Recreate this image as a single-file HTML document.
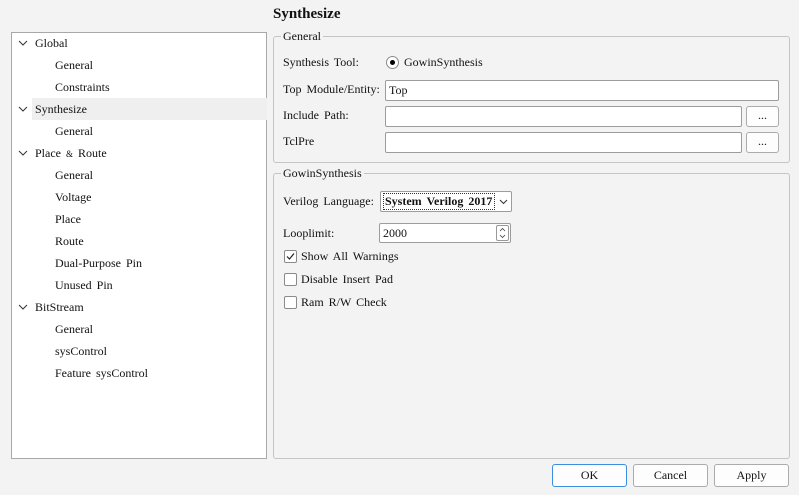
<!DOCTYPE html>
<html><head><meta charset="utf-8"><style>
*{box-sizing:border-box;margin:0;padding:0}
body{width:799px;height:495px;background:#f3f3f3;font-family:"Liberation Serif",serif;font-size:12px;color:#111;position:relative;overflow:hidden;word-spacing:2px}
.a{position:absolute;white-space:nowrap}
.tree{position:absolute;left:11px;top:32px;width:256px;height:427px;background:#fff;border:1px solid #a8a8a8}
.row{position:absolute;left:0;height:22px;line-height:22px}
.chev{position:absolute;left:6px;top:7px;width:10px;height:7px}
.grp{position:absolute;border:1px solid #c4c4c4;border-radius:3px}
.leg{position:absolute;background:#f3f3f3;padding:0 2px;line-height:12px}
.inp{position:absolute;background:#fff;border:1px solid #9c9c9c;border-radius:2px;padding-left:3px;line-height:18px}
.btn{position:absolute;background:#fdfdfd;border:1px solid #ababab;border-radius:3px;text-align:center}
.cb{position:absolute;width:13px;height:13px;border:1px solid #8a8a8a;border-radius:2px;background:#fff}
</style></head><body>
<div class="tree">
 <div class="row" style="top:65px;left:20px;width:235px;background:#efefef"></div>
 <svg class="chev" style="top:7px" viewBox="0 0 10 7"><path d="M1 1L5 5L9 1" fill="none" stroke="#333" stroke-width="1"/></svg>
 <div class="row" style="top:-1px;left:23px">Global</div>
 <div class="row" style="top:21px;left:43px">General</div>
 <div class="row" style="top:43px;left:43px">Constraints</div>
 <svg class="chev" style="top:73px" viewBox="0 0 10 7"><path d="M1 1L5 5L9 1" fill="none" stroke="#333" stroke-width="1"/></svg>
 <div class="row" style="top:65px;left:23px">Synthesize</div>
 <div class="row" style="top:87px;left:43px">General</div>
 <svg class="chev" style="top:117px" viewBox="0 0 10 7"><path d="M1 1L5 5L9 1" fill="none" stroke="#333" stroke-width="1"/></svg>
 <div class="row" style="top:109px;left:23px">Place <span style="font-size:9px">&amp;</span> Route</div>
 <div class="row" style="top:131px;left:43px">General</div>
 <div class="row" style="top:153px;left:43px">Voltage</div>
 <div class="row" style="top:175px;left:43px">Place</div>
 <div class="row" style="top:197px;left:43px">Route</div>
 <div class="row" style="top:219px;left:43px">Dual-Purpose Pin</div>
 <div class="row" style="top:241px;left:43px">Unused Pin</div>
 <svg class="chev" style="top:271px" viewBox="0 0 10 7"><path d="M1 1L5 5L9 1" fill="none" stroke="#333" stroke-width="1"/></svg>
 <div class="row" style="top:263px;left:23px">BitStream</div>
 <div class="row" style="top:285px;left:43px">General</div>
 <div class="row" style="top:307px;left:43px">sysControl</div>
 <div class="row" style="top:329px;left:43px">Feature sysControl</div>
</div>

<div class="a" style="left:273px;top:6px;font-size:15px;font-weight:bold;word-spacing:0">Synthesize</div>

<div class="grp" style="left:273px;top:36px;width:517px;height:127px"></div>
<div class="leg a" style="left:281px;top:30px">General</div>
<div class="a" style="left:283px;top:55px">Synthesis Tool:</div>
<div class="a" style="left:386px;top:56px;width:13px;height:13px;border:1px solid #8a8a8a;border-radius:50%;background:#fff"><div style="position:absolute;left:3px;top:3px;width:5px;height:5px;border-radius:50%;background:#000"></div></div>
<div class="a" style="left:404px;top:55px">GowinSynthesis</div>
<div class="a" style="left:283px;top:82px">Top Module/Entity:</div>
<div class="inp" style="left:385px;top:80px;width:394px;height:21px">Top</div>
<div class="a" style="left:283px;top:108px">Include Path:</div>
<div class="inp" style="left:385px;top:106px;width:357px;height:21px"></div>
<div class="btn" style="left:746px;top:106px;width:33px;height:21px;line-height:16px">...</div>
<div class="a" style="left:283px;top:134px">TclPre</div>
<div class="inp" style="left:385px;top:132px;width:357px;height:21px"></div>
<div class="btn" style="left:746px;top:132px;width:33px;height:21px;line-height:16px">...</div>

<div class="grp" style="left:273px;top:173px;width:517px;height:286px"></div>
<div class="leg a" style="left:281px;top:167px">GowinSynthesis</div>
<div class="a" style="left:283px;top:194px">Verilog Language:</div>
<div class="inp" style="left:380px;top:191px;width:132px;height:21px;padding:1px 2px"><div style="border:1px dotted #333;line-height:15px;font-weight:bold;width:112px;padding-left:1px">System Verilog 2017</div></div>
<svg class="a" style="left:499px;top:199px" width="9" height="6" viewBox="0 0 9 6"><path d="M1 1L4.5 4.5L8 1" fill="none" stroke="#333"/></svg>
<div class="a" style="left:283px;top:226px">Looplimit:</div>
<div class="inp" style="left:379px;top:223px;width:132px;height:20px">2000</div>
<div class="a" style="left:496px;top:225px;width:13px;height:16px;border:1px solid #999;border-radius:2px;background:#fff"></div>
<svg class="a" style="left:499px;top:227px" width="7" height="12" viewBox="0 0 7 12"><path d="M1 4L3.5 1.5L6 4M1 8L3.5 10.5L6 8" fill="none" stroke="#444" stroke-width="0.8"/></svg>
<div class="cb" style="left:284px;top:250px"><svg width="11" height="11" viewBox="0 0 11 11" style="position:absolute;left:0;top:0"><path d="M2 5.5L4.5 8L9 2.5" fill="none" stroke="#222" stroke-width="1.2"/></svg></div>
<div class="a" style="left:301px;top:249px">Show All Warnings</div>
<div class="cb" style="left:284px;top:273px"></div>
<div class="a" style="left:301px;top:272px">Disable Insert Pad</div>
<div class="cb" style="left:284px;top:296px"></div>
<div class="a" style="left:301px;top:295px">Ram R/W Check</div>

<div class="btn" style="left:552px;top:464px;width:75px;height:23px;line-height:21px;border-color:#3d8ee0">OK</div>
<div class="btn" style="left:633px;top:464px;width:75px;height:23px;line-height:21px">Cancel</div>
<div class="btn" style="left:714px;top:464px;width:75px;height:23px;line-height:21px">Apply</div>
</body></html>
